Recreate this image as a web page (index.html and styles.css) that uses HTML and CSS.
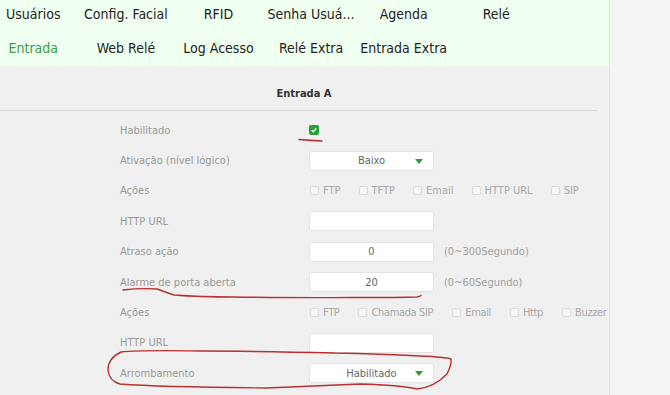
FILE: index.html
```html
<!DOCTYPE html>
<html lang="pt">
<head>
    <meta charset="UTF-8">
    <title>Entrada</title>
    <link rel="stylesheet" href="styles.css">
</head>
<body>
    <div class="page">
        <div class="main">
            <nav class="tabs">
                <a class="tab">Usuários</a>
                <a class="tab">Config. Facial</a>
                <a class="tab">RFID</a>
                <a class="tab">Senha Usuá...</a>
                <a class="tab">Agenda</a>
                <a class="tab">Relé</a>
                <a class="tab active">Entrada</a>
                <a class="tab">Web Relé</a>
                <a class="tab">Log Acesso</a>
                <a class="tab">Relé Extra</a>
                <a class="tab">Entrada Extra</a>
            </nav>

            <div class="title">Entrada A</div>

            <div class="form">
                <div class="label">Habilitado</div>
                <div class="field"><span class="check on"><svg viewBox="0 0 10 10" width="10" height="10"><path d="M2.6 5.2 L4.3 6.8 L7.4 3.4" fill="none" stroke="#fff" stroke-width="1.3"/></svg></span></div>

                <div class="label">Ativação (nível lógico)</div>
                <div class="field"><div class="input select">Baixo<span class="arrow"></span></div></div>

                <div class="label">Ações</div>
                <div class="field options">
                    <span class="opt"><span class="check"></span>FTP</span>
                    <span class="opt"><span class="check"></span>TFTP</span>
                    <span class="opt"><span class="check"></span>Email</span>
                    <span class="opt"><span class="check"></span>HTTP URL</span>
                    <span class="opt"><span class="check"></span>SIP</span>
                </div>

                <div class="label">HTTP URL</div>
                <div class="field"><div class="input"></div></div>

                <div class="label">Atraso ação</div>
                <div class="field"><div class="input">0</div><span class="hint">(0~300Segundo)</span></div>

                <div class="label">Alarme de porta aberta</div>
                <div class="field"><div class="input">20</div><span class="hint">(0~60Segundo)</span></div>

                <div class="label">Ações</div>
                <div class="field options tight">
                    <span class="opt"><span class="check"></span>FTP</span>
                    <span class="opt"><span class="check"></span>Chamada SIP</span>
                    <span class="opt"><span class="check"></span>Email</span>
                    <span class="opt"><span class="check"></span>Http</span>
                    <span class="opt"><span class="check"></span>Buzzer</span>
                </div>

                <div class="label">HTTP URL</div>
                <div class="field"><div class="input"></div></div>

                <div class="label">Arrombamento</div>
                <div class="field"><div class="input select">Habilitado<span class="arrow"></span></div></div>
            </div>
        </div>
        <div class="side"></div>
    </div>

    <svg class="marks" width="670" height="395" viewBox="0 0 670 395">
        <path d="M299 139.5 Q311 140.5 322 141"/>
        <path d="M123 290 Q140 288 157 289 Q165 292 174 295 Q200 297 233 297 Q300 298 350 297.5 Q400 297.5 417 297 Q420 296.5 421 295.5"/>
        <path d="M335 353 Q250 351 200 351 Q140 350 121 352 Q108 358 108 370 Q109 381 120 384 Q160 387 267 388 Q310 386 360 384 Q400 385 417 389 Q433 388 447 374 Q452 364 451 359 Q445 357 420 356 Q380 354 335 353"/>
    </svg>
</body>
</html>
```

FILE: styles.css
```css
body {
    margin: 0;
    width: 670px;
    height: 395px;
    overflow: hidden;
    font-family: "DejaVu Sans Condensed", "DejaVu Sans", sans-serif;
    background-color: #f0f0f0;
    position: relative;
}

.page {
    display: flex;
    height: 395px;
}

.main {
    width: 609px;
    flex: none;
    overflow: hidden;
}

.side {
    flex: 1;
    background-color: #f4f4f4;
    border-left: 1px solid #e4e4e4;
}

.tabs {
    display: grid;
    grid-template-columns: repeat(6, 92.6px);
    grid-template-rows: 29px 37px;
    margin-left: -13px;
    padding-left: 13px;
    background-color: #effff0;
}

.tabs .tab {
    justify-self: center;
    align-self: center;
    font-size: 14px;
    color: #222;
    white-space: nowrap;
    position: relative;
    left: -13px;
}

.tabs .tab:nth-child(-n+6) {
    top: -1px;
}

.tabs .tab.active {
    color: #36a046;
}

.title {
    height: 45px;
    box-sizing: border-box;
    padding-top: 10px;
    display: flex;
    align-items: center;
    justify-content: center;
    margin-right: 12px;
    border-bottom: 1px solid #dadada;
    font-size: 11px;
    font-weight: bold;
    color: #333;
    padding-left: 11px;
}

.form {
    display: grid;
    grid-template-columns: 189px auto;
    grid-auto-rows: 30.4px;
    padding: 4px 0 0 120px;
}

.label {
    display: flex;
    align-items: center;
    font-size: 11px;
    color: #999;
}

.field {
    display: flex;
    align-items: center;
    gap: 10px;
}

.input {
    width: 125px;
    height: 20px;
    box-sizing: border-box;
    background: #fff;
    border: 1px solid #e3e3e3;
    border-radius: 3px;
    display: flex;
    align-items: center;
    justify-content: center;
    font-size: 11px;
    color: #666;
    position: relative;
}

.select .arrow {
    position: absolute;
    right: 10px;
    top: 7px;
    border-left: 4px solid transparent;
    border-right: 4px solid transparent;
    border-top: 5px solid #2d9a3b;
}

.hint {
    font-size: 11px;
    color: #a0a0a0;
}

.check {
    width: 9px;
    height: 9px;
    box-sizing: border-box;
    border: 1px solid #dcdcdc;
    border-radius: 2px;
    background: #f7f7f7;
    display: inline-block;
    flex: none;
}

.check.on {
    width: 10px;
    height: 10px;
    border: none;
    background: #23a13a;
    display: flex;
}

.options {
    gap: 18px;
    padding-left: 1px;
    white-space: nowrap;
}

.options.tight {
    gap: 19px;
    letter-spacing: -0.35px;
}

.opt {
    display: flex;
    align-items: center;
    gap: 4px;
    font-size: 11px;
    color: #a8a8a8;
}

.marks {
    position: absolute;
    left: 0;
    top: 0;
    pointer-events: none;
}

.marks path {
    fill: none;
    stroke: #b83030;
    stroke-width: 1.4;
    stroke-linecap: round;
}
```
